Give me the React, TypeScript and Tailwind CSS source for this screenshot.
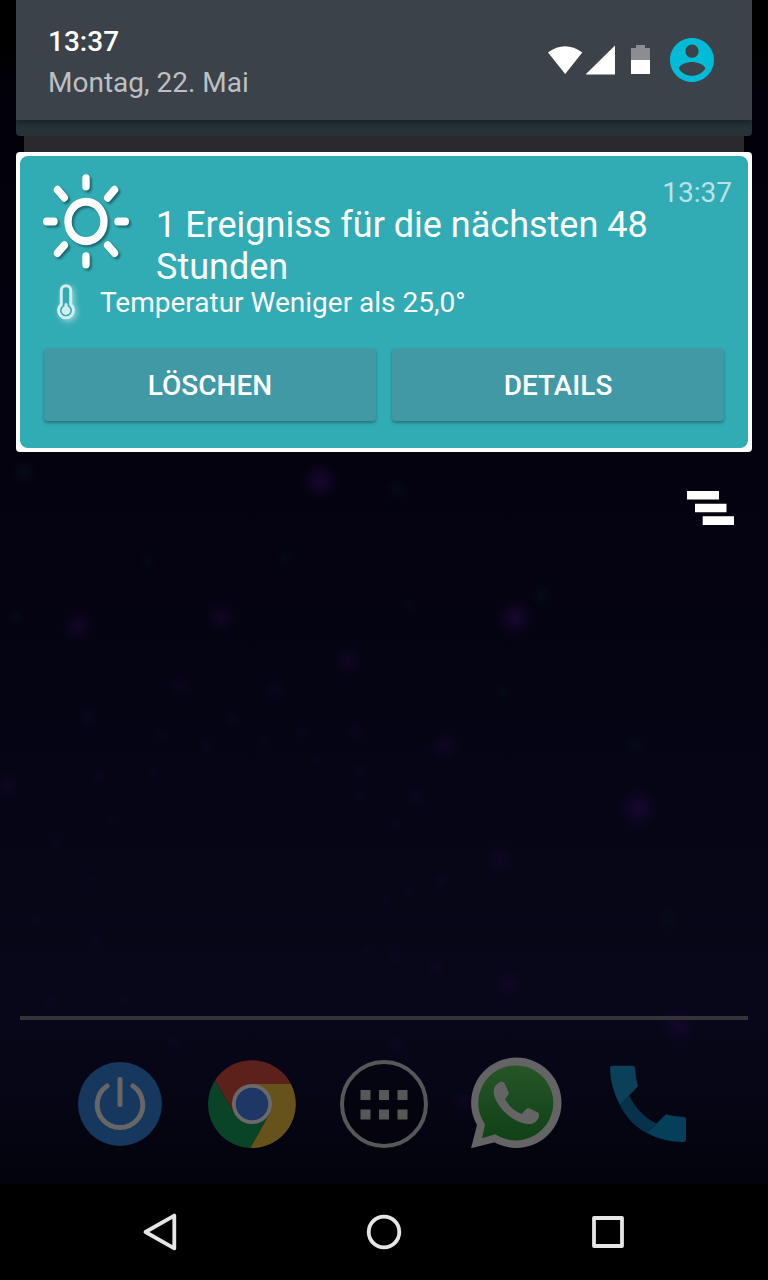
import React from "react";

type Spark = [x: number, y: number, r: number, opacity: number, hue: "violet" | "teal"];

const sparks: Spark[] = [
  [320, 481, 20, 0.85, "violet"], [515, 618, 20, 0.85, "violet"], [638, 808, 22, 0.8, "violet"],
  [78, 626, 17, 0.65, "violet"], [221, 617, 16, 0.6, "violet"], [348, 661, 16, 0.55, "violet"],
  [445, 746, 16, 0.5, "violet"], [500, 859, 16, 0.45, "violet"], [508, 984, 16, 0.5, "violet"],
  [678, 1025, 20, 0.65, "violet"], [8, 785, 14, 0.4, "violet"], [181, 686, 12, 0.3, "violet"],
  [275, 690, 12, 0.3, "violet"], [88, 718, 12, 0.3, "violet"], [357, 731, 11, 0.25, "violet"],
  [416, 797, 12, 0.3, "violet"], [359, 770, 10, 0.25, "violet"], [233, 719, 8, 0.25, "violet"],
  [162, 734, 8, 0.2, "violet"], [207, 746, 8, 0.25, "violet"], [265, 741, 7, 0.2, "violet"],
  [302, 732, 8, 0.2, "violet"], [317, 758, 7, 0.2, "violet"], [99, 777, 9, 0.25, "violet"],
  [154, 773, 8, 0.25, "violet"], [359, 795, 8, 0.2, "violet"], [396, 825, 8, 0.2, "violet"],
  [442, 880, 9, 0.3, "violet"], [409, 892, 7, 0.25, "violet"], [385, 898, 6, 0.2, "violet"],
  [114, 818, 8, 0.15, "violet"], [55, 842, 8, 0.2, "violet"], [92, 880, 8, 0.15, "violet"],
  [37, 921, 9, 0.2, "violet"], [96, 942, 8, 0.2, "violet"], [395, 957, 10, 0.25, "violet"],
  [436, 967, 12, 0.3, "violet"], [367, 951, 7, 0.2, "violet"], [51, 1001, 11, 0.25, "violet"],
  [125, 1000, 9, 0.2, "violet"], [330, 990, 8, 0.15, "violet"], [174, 1041, 9, 0.25, "violet"],
  [397, 1044, 11, 0.3, "violet"], [464, 1101, 14, 0.35, "violet"],
  [24, 472, 12, 0.6, "teal"], [397, 490, 12, 0.45, "teal"], [541, 595, 11, 0.5, "teal"],
  [148, 561, 9, 0.35, "teal"], [285, 558, 9, 0.35, "teal"], [409, 604, 8, 0.35, "teal"],
  [16, 618, 8, 0.4, "teal"], [503, 692, 8, 0.4, "teal"], [635, 745, 10, 0.4, "teal"],
  [667, 919, 12, 0.4, "teal"],
];

function Wallpaper() {
  return (
    <svg
      aria-hidden="true"
      className="absolute inset-0 -z-10 h-full w-full"
      viewBox="0 0 768 1280"
      preserveAspectRatio="xMidYMid slice"
    >
      <defs>
        <linearGradient id="sky" x1="0" y1="0" x2="0" y2="1">
          <stop offset="0" stopColor="#000000" />
          <stop offset="0.036" stopColor="#000001" />
          <stop offset="0.07" stopColor="#020009" />
          <stop offset="0.35" stopColor="#04020f" />
          <stop offset="0.55" stopColor="#050413" />
          <stop offset="0.78" stopColor="#070719" />
          <stop offset="0.84" stopColor="#070617" />
          <stop offset="0.925" stopColor="#03030c" />
        </linearGradient>
        <radialGradient id="violet">
          <stop offset="0" stopColor="#1d0735" />
          <stop offset="0.4" stopColor="#190630" stopOpacity="0.7" />
          <stop offset="1" stopColor="#11052a" stopOpacity="0" />
        </radialGradient>
        <radialGradient id="teal">
          <stop offset="0" stopColor="#04141c" />
          <stop offset="1" stopColor="#04141c" stopOpacity="0" />
        </radialGradient>
      </defs>
      <rect width="768" height="1280" fill="url(#sky)" />
      {sparks.map(([x, y, r, opacity, hue]) => (
        <circle key={`${x}-${y}`} cx={x} cy={y} r={r} opacity={opacity} fill={`url(#${hue})`} />
      ))}
    </svg>
  );
}

function StatusHeader() {
  return (
    <header className="mx-4 flex h-30 items-start justify-between bg-[#3b4249] pr-[38px] pl-8 shadow-[0_3px_5px_rgba(0,0,0,0.35)]">
      <div className="pt-[21px] text-[28px] leading-[41px]">
        <time className="block font-medium text-white">13:37</time>
        <p className="text-[#bdc0c2]">Montag, 22. Mai</p>
      </div>
      <div className="flex h-full items-center">
        <svg aria-label="WLAN" className="h-[30px] w-9" viewBox="0 0 36 30">
          <path d="M0 7.500Q17 -5 34.300 7.500L17.200 29z" fill="#fff" />
        </svg>
        <svg aria-label="Mobilfunk" className="ml-0.5 h-[30px] w-[30px]" viewBox="0 0 30 30">
          <path d="M-0.500 29.500L29 0.500V29.500z" fill="#fff" />
        </svg>
        <svg aria-label="Akku" className="ml-[15px] h-[30px] w-[19px]" viewBox="0 0 19 30">
          <path d="M0 3H5V0H14V3H19V15H0z" fill="#8a8e92" />
          <path d="M0 15H19V29H0z" fill="#fff" />
        </svg>
        <button type="button" aria-label="Benutzerprofil" className="ml-5">
          <svg className="size-11" viewBox="2 2 20 20" fill="#00bcd6">
            <path d="M12 2C6.480 2 2 6.480 2 12s4.480 10 10 10 10-4.480 10-10S17.520 2 12 2zm0 3c1.660 0 3 1.340 3 3s-1.340 3-3 3-3-1.340-3-3 1.340-3 3-3zm0 14.200c-2.500 0-4.710-1.280-6-3.220.03-1.990 4-3.080 6-3.080 1.990 0 5.970 1.090 6 3.080-1.290 1.940-3.500 3.220-6 3.220z" />
          </svg>
        </button>
      </div>
    </header>
  );
}

function SunIcon() {
  return (
    <svg
      aria-hidden="true"
      className="h-24 w-[86px] shrink-0 overflow-visible drop-shadow-[2px_2px_1px_rgba(0,0,0,0.4)]"
      viewBox="1 0 86 88"
      preserveAspectRatio="none"
      fill="none"
      stroke="#fff"
      strokeWidth="7.400"
      strokeLinecap="round"
    >
      <circle cx="44" cy="43.500" r="18" />
      <path d="M44 4V11.500M44 75.500V83M4.700 43.500H12M76 43.500H83.300M15.500 14.500L22.300 21.700M72.500 14.500L65.700 21.700M15.500 72.500L22.300 65.300M72.500 72.500L65.700 65.300" />
    </svg>
  );
}

function ThermometerIcon() {
  return (
    <svg
      aria-hidden="true"
      className="size-10 shrink-0 overflow-visible drop-shadow-[2px_2px_3px_rgba(255,255,255,0.5)]"
      viewBox="0 0 40 40"
    >
      <path
        d="M15.300 21.500V7.500a4.700 4.700 0 0 1 9.400 0V21.500a7.500 7.500 0 1 1-9.400 0z"
        fill="#31abb4"
        stroke="#d2edf0"
        strokeWidth="3"
      />
      <circle cx="20" cy="27.500" r="4.400" fill="#d2edf0" />
      <path d="M20 21.500V27" stroke="#d2edf0" strokeWidth="3" strokeLinecap="round" />
    </svg>
  );
}

function ActionButton({ children }: { children: React.ReactNode }) {
  return (
    <button
      type="button"
      className="h-[73px] flex-1 rounded-sm bg-[#4199a5] pt-0.5 text-[28px] font-medium text-white shadow-[0_2px_3px_rgba(0,0,0,0.3)]"
    >
      {children}
    </button>
  );
}

function NotificationCard() {
  return (
    <article className="mx-4 rounded-sm bg-white p-1">
      <div className="rounded-lg bg-[#31abb4] pb-[27px] text-white">
        <div className="flex items-start gap-[27px] pt-[18px] pr-4 pl-[23px]">
          <SunIcon />
          <div className="flex flex-1 flex-col pt-1.5">
            <time className="self-end text-[28px] leading-[26px] text-[#b9e2e5]">13:37</time>
            <h1 className="-mt-0.5 text-4xl leading-[42px]">1 Ereigniss für die nächsten 48 Stunden</h1>
          </div>
        </div>
        <div className="flex h-[30px] items-center gap-3.5 pl-[26px]">
          <ThermometerIcon />
          <p className="text-[28px] leading-7">Temperatur Weniger als 25,0°</p>
        </div>
        <div className="mt-[30px] flex gap-4 px-6">
          <ActionButton>LÖSCHEN</ActionButton>
          <ActionButton>DETAILS</ActionButton>
        </div>
      </div>
    </article>
  );
}

function PowerIcon() {
  return (
    <svg className="size-[84px]" viewBox="0 0 84 84" fill="none">
      <circle cx="42" cy="42" r="42" fill="#16375e" />
      <g stroke="#666666" strokeWidth="5" strokeLinecap="round">
        <path d="M29 24A22.800 22.800 0 1 0 55 24" />
        <path d="M42 17.500V42.500" />
      </g>
    </svg>
  );
}

function ChromeIcon() {
  return (
    <svg className="size-22" viewBox="0 0 88 88">
      <path d="M7 20.300A44 44 0 0 0 42.300 88L61.300 54L44 44L26.700 54z" fill="#084425" />
      <path d="M83 24A44 44 0 0 1 42.300 88L61.300 54L44 24z" fill="#66521b" />
      <path d="M7 20.300A44 44 0 0 1 83 24H44L26.700 54z" fill="#5c211b" />
      <circle cx="44" cy="44" r="20" fill="#6a6a6a" />
      <circle cx="44" cy="44" r="16.300" fill="#1f3767" />
    </svg>
  );
}

function AppsIcon() {
  return (
    <svg className="size-22" viewBox="0 0 88 88">
      <circle cx="44" cy="44" r="42" fill="#02020a" fillOpacity="0.4" stroke="#575757" strokeWidth="4" />
      {[30, 49.5].map((y) =>
        [20.5, 39, 57.5].map((x) => <rect key={`${x}-${y}`} x={x} y={y} width="10" height="10" fill="#575757" />),
      )}
    </svg>
  );
}

function WhatsAppIcon() {
  return (
    <svg className="size-[92px] shrink-0 overflow-visible" viewBox="0 0 92 92">
      <defs>
        <linearGradient id="bubble" x1="0" y1="0" x2="0" y2="1">
          <stop offset="0" stopColor="#275528" />
          <stop offset="1" stopColor="#0f4216" />
        </linearGradient>
      </defs>
      <circle cx="46.300" cy="44.700" r="45.200" fill="#646464" />
      <path d="M7 67L1 90.300L26 84L40 60L20 50z" fill="#646464" />
      <path
        d="M15 66.300L12 80.300L25.300 76.300A37.500 37.500 0 1 0 15 66.300z"
        fill="url(#bubble)"
      />
      <path
        d="M30 24C32 23.500 34 23.700 34.700 25.500L38.500 34Q39.200 35.500 38 37L35 41.300C39 48 44 53 51.700 56L56.500 50.700Q57.700 49.500 59.300 50.200L68 54.500Q69.300 55.300 69 57.500C68.500 63 63.500 66.500 58.500 66C46 65.500 33.500 55 27.500 45C22.500 37 21.500 28.500 30 24z"
        fill="#646464"
      />
    </svg>
  );
}

function PhoneIcon() {
  return (
    <svg className="size-[78px]" viewBox="0 0 78 78">
      <path d="M11 40L20.300 30.500C25.500 42 35 52.500 47.500 58.300L37.700 68C26 62 16.500 52 11 40z" fill="#07324b" />
      <path d="M3 0.700H23.500Q26 0.700 26 3.200Q26.500 13.500 29 21.300L11 40Q1.500 23 1 3.200Q1 0.700 3 0.700z" fill="#0a4058" />
      <path d="M57 49.200Q66 52 75 52Q77 52 77 54.300V74.500Q77 77 74.500 77Q54 77 37.700 68z" fill="#053f59" />
    </svg>
  );
}

const apps = [
  { label: "Energie", Icon: PowerIcon },
  { label: "Chrome", Icon: ChromeIcon },
  { label: "Alle Apps", Icon: AppsIcon },
  { label: "WhatsApp", Icon: WhatsAppIcon },
  { label: "Telefon", Icon: PhoneIcon },
];

function Dock() {
  return (
    <div>
      <hr className="mx-5 border-0 border-t-4 border-[#353338]" />
      <div className="grid grid-cols-5 px-[54px] pt-10 pb-9">
        {apps.map(({ label, Icon }) => (
          <button key={label} type="button" aria-label={label} className="flex h-22 items-center justify-center">
            <Icon />
          </button>
        ))}
      </div>
    </div>
  );
}

function NavigationBar() {
  return (
    <nav className="grid h-24 grid-cols-3 bg-black px-12">
      <button type="button" aria-label="Zurück" className="flex items-center justify-center">
        <svg className="size-10" viewBox="0 0 40 40" fill="none" stroke="#e6e6e6" strokeWidth="3.800" strokeLinejoin="round">
          <path d="M34.300 3.600V36.400L5.500 20z" />
        </svg>
      </button>
      <button type="button" aria-label="Startbildschirm" className="flex items-center justify-center">
        <svg className="size-10" viewBox="0 0 40 40" fill="none" stroke="#e6e6e6" strokeWidth="3.800">
          <circle cx="20" cy="20" r="15.300" />
        </svg>
      </button>
      <button type="button" aria-label="Letzte Apps" className="flex items-center justify-center">
        <svg className="size-10" viewBox="0 0 40 40" fill="none" stroke="#e6e6e6" strokeWidth="3.800" strokeLinejoin="round">
          <path d="M6 6H34V34H6z" />
        </svg>
      </button>
    </nav>
  );
}

export default function App() {
  return (
    <div className="relative isolate flex min-h-screen flex-col font-['Roboto',sans-serif]">
      <Wallpaper />
      <div className="mx-4 overflow-hidden rounded-b-sm bg-[#263238] pb-4">
        <div className="-mx-4">
          <StatusHeader />
        </div>
      </div>
      <div className="mx-6 h-4 bg-[#2a292e]" />
      <NotificationCard />
      <div className="flex flex-1 items-start justify-end pt-[39px] pr-[34px]">
        <button type="button" aria-label="Alle Benachrichtigungen löschen">
          <svg className="h-[34px] w-[47px]" viewBox="0 0 47 34" fill="#fff">
            <path d="M0 0H32V8.500H0zM8 12.700H39.500V21.300H8zM15.700 25.300H47V34H15.700z" />
          </svg>
        </button>
      </div>
      <Dock />
      <NavigationBar />
    </div>
  );
}
